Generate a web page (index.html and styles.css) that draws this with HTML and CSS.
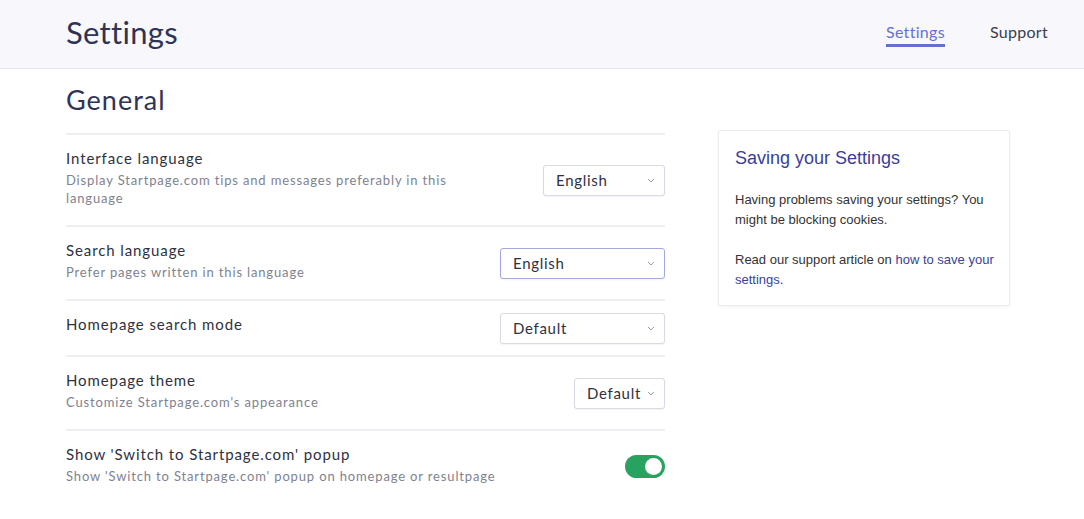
FILE: index.html
```html
<!DOCTYPE html>
<html lang="en">
<head>
<meta charset="utf-8">
<title>Settings</title>
<link rel="stylesheet" href="styles.css">
</head>
<body>
<header class="topbar">
  <h1 class="page-title">Settings</h1>
  <nav class="nav">
    <a class="nav-link active" href="#">Settings</a>
    <a class="nav-link" href="#">Support</a>
  </nav>
</header>
<main class="main">
  <section class="settings">
    <h2 class="section-title">General</h2>
    <div class="row">
      <div class="row-text">
        <div class="row-title">Interface language</div>
        <div class="row-desc">Display Startpage.com tips and messages preferably in this language</div>
      </div>
      <div class="select w122"><span>English</span><svg class="chev" viewBox="0 0 8 5"><path d="M1 1l3 3 3-3" fill="none" stroke="#9a9ca8" stroke-width="1"/></svg></div>
    </div>
    <div class="row">
      <div class="row-text">
        <div class="row-title">Search language</div>
        <div class="row-desc">Prefer pages written in this language</div>
      </div>
      <div class="select w165 focus"><span>English</span><svg class="chev" viewBox="0 0 8 5"><path d="M1 1l3 3 3-3" fill="none" stroke="#9a9ca8" stroke-width="1"/></svg></div>
    </div>
    <div class="row">
      <div class="row-text">
        <div class="row-title">Homepage search mode</div>
      </div>
      <div class="select w165"><span>Default</span><svg class="chev" viewBox="0 0 8 5"><path d="M1 1l3 3 3-3" fill="none" stroke="#9a9ca8" stroke-width="1"/></svg></div>
    </div>
    <div class="row">
      <div class="row-text">
        <div class="row-title">Homepage theme</div>
        <div class="row-desc">Customize Startpage.com's appearance</div>
      </div>
      <div class="select w91"><span>Default</span><svg class="chev" viewBox="0 0 8 5"><path d="M1 1l3 3 3-3" fill="none" stroke="#9a9ca8" stroke-width="1"/></svg></div>
    </div>
    <div class="row last">
      <div class="row-text">
        <div class="row-title">Show 'Switch to Startpage.com' popup</div>
        <div class="row-desc">Show 'Switch to Startpage.com' popup on homepage or resultpage</div>
      </div>
      <div class="toggle"><div class="knob"></div></div>
    </div>
  </section>
  <aside class="card">
    <h3 class="card-title">Saving your Settings</h3>
    <p class="card-text">Having problems saving your settings? You might be blocking cookies.</p>
    <p class="card-text">Read our support article on <a href="#">how to save your settings</a>.</p>
  </aside>
</main>
</body>
</html>
```
FILE: styles.css
```css
* { box-sizing: border-box; }
html, body { margin: 0; padding: 0; background: #fff; }
body { font-family: "Lato", "Open Sans", sans-serif; color: #2e3350; }

.topbar {
  height: 69px;
  background: #f8f8fc;
  border-bottom: 1px solid #e6e7ef;
  display: flex;
  align-items: center;
  justify-content: space-between;
  padding: 0 36px 0 66px;
}
.page-title {
  margin: 0;
  font-size: 31px;
  font-weight: 400;
  color: #2f3454;
  letter-spacing: 0.3px;
  position: relative;
  top: -2px;
}
.nav { display: flex; gap: 45px; align-self: stretch; align-items: center; }
.nav-link {
  font-size: 16px;
  color: #3a3d4f;
  text-decoration: none;
  letter-spacing: 0.3px;
  padding-bottom: 3px;
  border-bottom: 3px solid transparent;
  margin-top: 1px;
}
.nav-link.active { color: #6571d1; border-bottom-color: #6571d1; }

.main { display: flex; padding-left: 66px; gap: 53px; align-items: flex-start; }
.settings { width: 599px; flex-shrink: 0; }
.section-title {
  margin: 15px 0 0;
  font-size: 27px;
  font-weight: 400;
  color: #2f3454;
  line-height: 32px;
  letter-spacing: 1px;
  padding-bottom: 17px;
  border-bottom: 2px solid #eeeef3;
}
.row {
  display: flex;
  justify-content: space-between;
  align-items: center;
  gap: 20px;
  border-bottom: 2px solid #eeeef3;
}
.row.last { border-bottom: none; }
.row-text { flex: 1; min-width: 0; max-width: 436px; padding: 13px 0 18px; }
.row-title { font-size: 15px; line-height: 20px; color: #2f3142; letter-spacing: 0.9px; margin-bottom: 3px; }
.row-desc { font-size: 13px; line-height: 18px; color: #80828f; letter-spacing: 0.85px; }

.select {
  height: 31px;
  border: 1px solid #d9dae3;
  border-radius: 3px;
  display: flex;
  align-items: center;
  justify-content: space-between;
  padding: 0 9px 0 12px;
  font-size: 15px;
  letter-spacing: 0.7px;
  color: #2f3142;
  flex-shrink: 0;
  box-shadow: 0 1px 2px rgba(0,0,0,0.05);
  background: #fff;
}
.select.focus { border-color: #a3a8e0; }
.chev { width: 8px; height: 5px; }
.w122 { width: 122px; }
.w165 { width: 165px; }
.w91 { width: 91px; }

.toggle {
  width: 40px; height: 23px; border-radius: 12px;
  background: #27a35f;
  position: relative;
  flex-shrink: 0;
  margin-top: -2px;
}
.knob {
  position: absolute; right: 3px; top: 3px;
  width: 17px; height: 17px; border-radius: 50%; background: #fff;
}

.card {
  margin-top: 61px;
  width: 292px;
  border: 1px solid #ececf2;
  border-radius: 3px;
  box-shadow: 0 1px 3px rgba(0,0,0,0.06);
  padding: 16px 12px 15px 16px;
  font-family: "Liberation Sans", Arial, sans-serif;
}
.card-title { margin: 0 0 21px; font-size: 18px; font-weight: 400; color: #3a3f97; line-height: 22px; }
.card-text { margin: 0 0 20px; font-size: 13px; line-height: 20px; color: #333; }
.card-text:last-child { margin-bottom: 0; }
.card-text a { color: #3a3f97; text-decoration: none; }
```
